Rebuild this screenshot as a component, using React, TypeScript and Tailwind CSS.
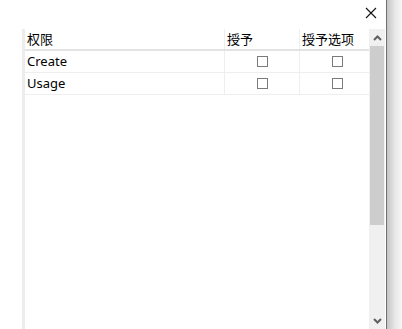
import { useState } from "react";

const rows = ["Create", "Usage"];

function Check() {
  const [on, setOn] = useState(false);
  return (
    <button
      onClick={() => setOn(!on)}
      className="flex h-[11px] w-[11px] items-center justify-center border border-[#7a7a7a] bg-white"
    >
      {on ? <span className="h-[5px] w-[5px] bg-[#333]" /> : null}
    </button>
  );
}

export default function App() {
  return (
    <div
      className="flex h-[329px] w-[402px] overflow-hidden bg-white text-[13px] text-black"
      style={{ fontFamily: '"Noto Sans", "Noto Sans CJK SC", sans-serif' }}
    >
      <div className="flex w-[387px] flex-col border-r border-[#6f6f6f] bg-white">
        <div className="flex h-[29px] justify-end pr-[10px] pt-[7px]">
          <svg width="12" height="12" viewBox="0 0 12 12" className="mr-[-1px]">
            <path d="M1 1 L11 11 M11 1 L1 11" stroke="#111" strokeWidth="1.1" />
          </svg>
        </div>
        <div className="flex min-h-0 flex-1 pl-[22px]">
          <div className="w-[3px] bg-[#ececec]" />
          <div className="w-[344px] overflow-hidden">
            <div className="w-[350px]">
              <div className="flex h-[22px] border-b-2 border-[#e3e3e3] leading-[20px]">
                <div className="w-[200px] border-r border-[#eeeeee] pl-[2px]">权限</div>
                <div className="w-[75px] border-r border-[#eeeeee] pl-[2px]">授予</div>
                <div className="w-[75px] pl-[2px]">授予选项</div>
              </div>
              {rows.map((r) => (
                <div key={r} className="flex h-[22px] items-stretch border-b border-[#eeeeee]">
                  <div className="flex w-[200px] items-center border-r border-[#eeeeee] pl-[2px]">{r}</div>
                  <div className="flex w-[75px] items-center justify-center border-r border-[#eeeeee]">
                    <Check />
                  </div>
                  <div className="flex w-[75px] items-center justify-center">
                    <Check />
                  </div>
                </div>
              ))}
            </div>
          </div>
          <div className="flex w-[16px] flex-col bg-[#f0f0f0]">
            <div className="flex h-[17px] items-center justify-center">
              <svg width="9" height="6" viewBox="0 0 9 6">
                <path d="M1 5 L4.5 1.5 L8 5" stroke="#606060" strokeWidth="2" fill="none" />
              </svg>
            </div>
            <div className="mx-[1px] h-[179px] bg-[#cdcdcd]" />
            <div className="flex-1" />
            <div className="flex h-[17px] items-center justify-center">
              <svg width="9" height="6" viewBox="0 0 9 6">
                <path d="M1 1 L4.5 4.5 L8 1" stroke="#606060" strokeWidth="2" fill="none" />
              </svg>
            </div>
          </div>
        </div>
      </div>
      <div className="flex-1 bg-gradient-to-r from-[#c4c4c4] via-[#e6e6e6] to-[#f7f7f7]" />
    </div>
  );
}
